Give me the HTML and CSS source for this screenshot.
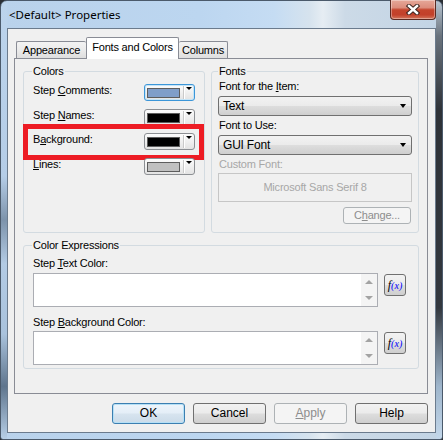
FILE: index.html
```html
<!DOCTYPE html>
<html lang="en">
<head>
  <meta charset="UTF-8" />
  <title>&lt;Default&gt; Properties</title>
  <link rel="stylesheet" href="styles.css">
</head>
<body>

  <!-- Dialog window -->
  <div class="window">
    <div class="titlebar">
      <span class="title">&lt;Default&gt; Properties</span>
      <div class="close">
        <svg width="14" height="11" viewBox="0 0 14 11">
          <path d="M3 2 L11 9 M11 2 L3 9" stroke="#3d2520" stroke-width="4.4" stroke-linecap="square" fill="none"/>
          <path d="M3 2 L11 9 M11 2 L3 9" stroke="#fff" stroke-width="2.4" stroke-linecap="square" fill="none"/>
        </svg>
      </div>
    </div>

    <div class="client">
      <div class="tabs">
        <div class="tab first">Appearance</div>
        <div class="tab active">Fonts and Colors</div>
        <div class="tab last">Columns</div>
      </div>

      <div class="page">
        <div class="top-row">

          <!-- Colors -->
          <fieldset class="group colors">
            <legend>Colors</legend>
            <div class="color-rows">
              <div class="color-row">
                <span class="label">Step <u>C</u>omments:</span>
                <div class="color-combo focused"><span class="swatch steel"></span><span class="drop"></span></div>
              </div>
              <div class="color-row">
                <span class="label">Step <u>N</u>ames:</span>
                <div class="color-combo"><span class="swatch black"></span><span class="drop"></span></div>
              </div>
              <div class="color-row marked">
                <span class="label">B<u>a</u>ckground:</span>
                <div class="color-combo"><span class="swatch black"></span><span class="drop"></span></div>
                <div class="mark"></div>
              </div>
              <div class="color-row">
                <span class="label"><u>L</u>ines:</span>
                <div class="color-combo"><span class="swatch silver"></span><span class="drop"></span></div>
              </div>
            </div>
          </fieldset>

          <!-- Fonts -->
          <fieldset class="group fonts">
            <legend>Fonts</legend>
            <div class="label first">Font for the <u>I</u>tem:</div>
            <div class="select">Text<span class="arrow"></span></div>
            <div class="label">Font to Use:</div>
            <div class="select">GUI Font<span class="arrow"></span></div>
            <div class="label disabled">Custom Font:</div>
            <div class="font-preview">Microsoft Sans Serif 8</div>
            <div class="btn-line">
              <div class="btn small disabled">C<u>h</u>ange...</div>
            </div>
          </fieldset>
        </div>

        <!-- Color expressions -->
        <fieldset class="group expr">
          <legend>Color Expressions</legend>
          <div class="label first">Step <u>T</u>ext Color:</div>
          <div class="expr-row">
            <div class="textbox"><div class="text"></div><div class="scroll"><span class="up"></span><span class="down"></span></div></div>
            <div class="fx"><i>f</i><b>(x)</b></div>
          </div>
          <div class="label second">Step <u>B</u>ackground Color:</div>
          <div class="expr-row">
            <div class="textbox"><div class="text"></div><div class="scroll"><span class="up"></span><span class="down"></span></div></div>
            <div class="fx"><i>f</i><b>(x)</b></div>
          </div>
        </fieldset>
      </div>

      <div class="buttons">
        <div class="btn default">OK</div>
        <div class="btn">Cancel</div>
        <div class="btn disabled"><u>A</u>pply</div>
        <div class="btn">Help</div>
      </div>
    </div>
  </div>

</body>
</html>
```

FILE: styles.css
```css
* {
  box-sizing: border-box;
  margin: 0;
  padding: 0;
}

body {
  width: 443px;
  height: 440px;
  overflow: hidden;
  background: #2b2f35;
  font-family: 'Liberation Sans', Arial, sans-serif;
  font-size: 11px;
  letter-spacing: -0.2px;
  color: #000;
}

u {
  text-underline-offset: 1px;
}

/* window frame */
.window {
  width: 443px;
  height: 440px;
  display: flex;
  flex-direction: column;
  padding: 0 6px 6px 6px;
  border: 1px solid #4b5a6b;
  border-radius: 7px 7px 3px 3px;
  background:
    linear-gradient(to bottom, #b9c6d2 0, #6a737d 8%, #2e3238 25%, #33383f 70%, #9fb6cc 88%, #c3d7ea 100%) right / 6px 100% no-repeat,
    linear-gradient(to bottom, #bcd4ec 0, #b5cde7 40%, #7d93ab 50%, #b3cbe4 60%, #a9c2dc 76%, #5f758d 88%, #b7cfe7 100%) left / 6px 100% no-repeat,
    linear-gradient(to right, #b9d2eb 0, #bcd6f0 45%, #c5dcf3 62%, #d6e3ee 70%, #e6edf3 73%, #ccdae7 78%, #c2d4e5 100%);
}

.titlebar {
  height: 27px;
  display: flex;
  justify-content: space-between;
  align-items: flex-start;
}

.title {
  padding-left: 2px;
  line-height: 27px;
  font-family: 'Noto Sans', sans-serif;
  font-size: 11.5px;
  letter-spacing: 0;
  color: #000;
}

.close {
  width: 46px;
  height: 20px;
  margin-top: -1px;
  display: flex;
  align-items: center;
  justify-content: center;
  border: 1px solid #5a2a22;
  border-top: none;
  border-radius: 0 0 4px 4px;
  background: linear-gradient(#e6a899 0, #dc8d7c 40%, #c4442c 52%, #c2402a 78%, #d3765c 100%);
  box-shadow: inset 0 0 0 1px rgba(255, 255, 255, 0.35);
}

/* client area */
.client {
  flex: 1;
  background: #f0f0f0;
  border: 1px solid #6b7b8d;
  padding: 8px 7px 0 6px;
}

.tabs {
  display: flex;
  align-items: flex-end;
  height: 21px;
  margin-left: 2px;
  position: relative;
  z-index: 1;
}

.tab {
  height: 17px;
  line-height: 16px;
  text-align: center;
  border: 1px solid #898c95;
  border-bottom: none;
  border-radius: 2px 2px 0 0;
  background: linear-gradient(#f3f3f3, #ebebeb 50%, #dedede);
}

.tab.first {
  width: 70px;
  border-right: none;
}

.tab.active {
  width: 93px;
  height: 22px;
  margin-bottom: -1px;
  line-height: 19px;
  background: #fff;
}

.tab.last {
  width: 49px;
  border-left: none;
}

.page {
  height: 336px;
  border: 1px solid #898c95;
  background: #f0f0f0;
  padding: 5px 8px 0;
}

.top-row {
  display: flex;
  gap: 6px;
}

.group {
  border: 1px solid #d3dbe1;
  border-radius: 3px;
  min-width: 0;
}

.group legend {
  padding: 0 1px;
  line-height: 14px;
}

.label {
  line-height: 14px;
  padding-left: 1px;
}

.label.disabled {
  color: #a7a7a7;
}

/* colors group */
.colors {
  width: 182px;
  padding: 0 9px;
}

.colors legend {
  margin-left: -1px;
}

.color-rows {
  display: grid;
  row-gap: 7.67px;
  margin-top: 6px;
}

.color-row {
  position: relative;
  display: flex;
  justify-content: space-between;
  align-items: flex-start;
}

.color-row .label {
  padding-left: 0;
  line-height: 13px;
}

.color-combo {
  width: 51px;
  height: 17px;
  display: flex;
  padding: 3px 0 2px 2px;
  border: 1px solid #8c8f93;
  border-radius: 3px;
  background: linear-gradient(#fcfcfc, #f0f0f0 50%, #e3e3e3);
}

.color-combo.focused {
  border-color: #3c96d8;
  box-shadow: inset 0 0 0 1px #c4e4f7;
}

.swatch {
  width: 33px;
  border: 1px solid #5d5d5d;
}

.swatch.steel {
  background: #7f9ec9;
}

.swatch.black {
  background: #000;
}

.swatch.silver {
  background: #c0c0c0;
}

.drop {
  flex: 1;
  margin: -2px 0 -1px 3px;
  border-left: 1px solid #c9c9c9;
  box-shadow: inset 1px 0 #fff;
  position: relative;
}

.drop::after {
  content: "";
  position: absolute;
  left: 2px;
  top: 1px;
  border-left: 3px solid transparent;
  border-right: 3px solid transparent;
  border-top: 3px solid #000;
}

.mark {
  position: absolute;
  left: -10px;
  top: -9px;
  right: -9px;
  bottom: -10px;
  border: 5px solid #ed1c24;
}

/* fonts group */
.fonts {
  flex: 1;
  padding: 0 6px 8px;
}

.fonts .label.first {
  margin-top: 1px;
}

.select {
  position: relative;
  height: 20px;
  margin: 3px 0 2px;
  padding-left: 4px;
  line-height: 18px;
  font-size: 12px;
  border: 1px solid #707070;
  border-radius: 3px;
  background: linear-gradient(#f2f2f2 0, #ebebeb 48%, #dddddd 52%, #cfcfcf 100%);
}

.select .arrow {
  position: absolute;
  right: 5px;
  top: 7px;
  border-left: 3.5px solid transparent;
  border-right: 3.5px solid transparent;
  border-top: 4px solid #000;
}

.fonts .label.disabled {
  margin-top: 1px;
}

.font-preview {
  height: 29px;
  margin-top: 2px;
  line-height: 27px;
  text-align: center;
  color: #a7a7a7;
  border: 1px solid #c6c6c6;
}

.btn-line {
  display: flex;
  justify-content: flex-end;
  margin-top: 5px;
  padding-right: 1px;
}

/* expressions group */
.expr {
  margin-top: 5px;
  padding: 0 9px 3px;
}

.expr legend {
  margin-left: -1px;
}

.expr .label {
  padding-left: 0;
}

.expr .label.first {
  margin-top: 4px;
}

.expr .label.second {
  margin-top: 8px;
}

.expr-row {
  display: flex;
  align-items: flex-start;
  gap: 6px;
  margin-top: 2px;
}

.expr .label.first + .expr-row {
  margin-top: 3px;
}

.textbox {
  width: 345px;
  height: 34px;
  display: flex;
  border: 1px solid #abadb3;
  background: #fff;
}

.textbox .text {
  flex: 1;
}

.scroll {
  width: 16px;
  display: flex;
  flex-direction: column;
  background: #f4f4f4;
}

.scroll span {
  flex: 1;
  display: flex;
  align-items: center;
  justify-content: center;
}

.scroll .up::after,
.scroll .down::after {
  content: "";
  border-left: 4px solid transparent;
  border-right: 4px solid transparent;
}

.scroll .up::after {
  border-bottom: 4px solid #a3a3a3;
}

.scroll .down::after {
  border-top: 4px solid #a3a3a3;
}

.fx {
  width: 22px;
  height: 22px;
  margin-top: 1px;
  display: flex;
  align-items: center;
  justify-content: center;
  font-family: 'Liberation Serif', serif;
  font-size: 12px;
  letter-spacing: 0;
  border: 1px solid #707070;
  border-radius: 3px;
  background: linear-gradient(#f2f2f2 0, #ebebeb 48%, #dddddd 52%, #cfcfcf 100%);
}

.fx i {
  font-style: italic;
}

.fx b {
  font-weight: normal;
  font-style: italic;
  color: #0000ff;
  font-size: 10px;
}

/* bottom buttons */
.buttons {
  display: flex;
  justify-content: flex-end;
  gap: 8px;
  margin-top: 9px;
}

.btn {
  width: 73px;
  height: 21px;
  line-height: 19px;
  text-align: center;
  font-size: 12px;
  letter-spacing: 0;
  border: 1px solid #707070;
  border-radius: 3px;
  background: linear-gradient(#f2f2f2 0, #ebebeb 48%, #dddddd 52%, #cfcfcf 100%);
}

.btn.default {
  border-color: #3c7fb1;
  box-shadow: inset 0 0 0 1px #b6e0f6;
  background: linear-gradient(#eef5fb 0, #e4eef7 48%, #d7e4ef 52%, #cbdbe9 100%);
}

.btn.disabled {
  color: #8d8d8d;
  border-color: #adb2b5;
  background: #f4f4f4;
}

.btn.small {
  width: 68px;
  height: 17px;
  line-height: 15px;
  font-size: 11px;
  letter-spacing: -0.2px;
}
```
